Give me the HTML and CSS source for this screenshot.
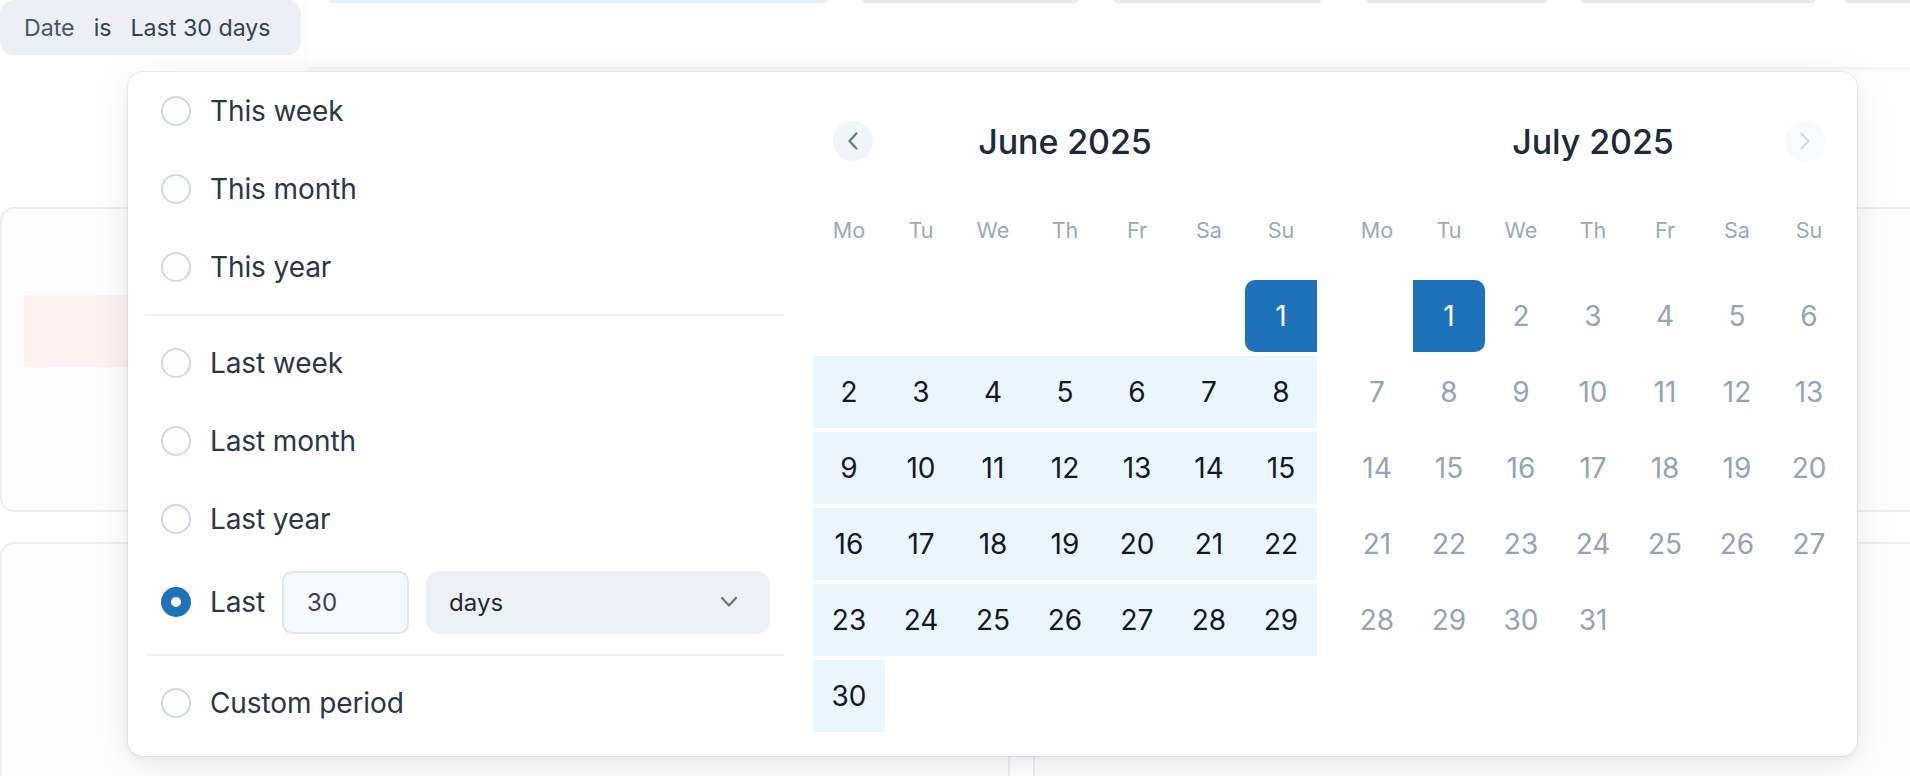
FILE: index.html
```html
<!DOCTYPE html>
<html lang="en">
<head>
<meta charset="utf-8">
<title>Date filter</title>
<link rel="stylesheet" href="styles.css">
</head>
<body>
<div class="page">
  <div class="topbar">
    <div class="chip"><span class="chip-key">Date</span><span class="chip-op">is</span><span class="chip-val">Last 30 days</span></div>
    <div class="toolbox">
      <span class="bar b1"></span><span class="bar b2"></span><span class="bar b3"></span><span class="bar b4"></span><span class="bar b5"></span><span class="bar b6"></span>
    </div>
  </div>
  <div class="cards">
    <div class="card card-wide"><div class="pink"></div></div>
    <div class="card-row">
      <div class="card c2a"></div>
      <div class="card c2b"></div>
    </div>
  </div>

  <div class="popup">
    <div class="presets">
      <div class="opt"><span class="radio"></span><span class="lbl">This week</span></div>
      <div class="opt"><span class="radio"></span><span class="lbl">This month</span></div>
      <div class="opt"><span class="radio"></span><span class="lbl">This year</span></div>
      <div class="sep"></div>
      <div class="opt"><span class="radio"></span><span class="lbl">Last week</span></div>
      <div class="opt"><span class="radio"></span><span class="lbl">Last month</span></div>
      <div class="opt"><span class="radio"></span><span class="lbl">Last year</span></div>
      <div class="opt opt-last"><span class="radio on"></span><span class="lbl">Last</span>
        <div class="num">30</div>
        <div class="select"><span>days</span>
          <svg class="chev" width="20" height="12" viewBox="0 0 20 12"><path d="M3 2 L10 9.5 L17 2" fill="none" stroke="#64748b" stroke-width="2.2" stroke-linecap="round" stroke-linejoin="round"/></svg>
        </div>
      </div>
      <div class="sep"></div>
      <div class="opt"><span class="radio"></span><span class="lbl">Custom period</span></div>
    </div>

    <div class="months">
      <div class="cal">
        <div class="cal-head">
          <span class="nav nav-prev"><svg width="12" height="20" viewBox="0 0 12 20"><path d="M9.5 2.5 L2.5 10 L9.5 17.5" fill="none" stroke="#64748b" stroke-width="2.2" stroke-linecap="round" stroke-linejoin="round"/></svg></span>
          <span class="title">June 2025</span>
          <span class="nav nav-ghost"></span>
        </div>
        <div class="dow"><span>Mo</span><span>Tu</span><span>We</span><span>Th</span><span>Fr</span><span>Sa</span><span>Su</span></div>
        <div class="weeks">
          <span class="d e"></span><span class="d e"></span><span class="d e"></span><span class="d e"></span><span class="d e"></span><span class="d e"></span><span class="d start">1</span>
          <span class="d in">2</span><span class="d in">3</span><span class="d in">4</span><span class="d in">5</span><span class="d in">6</span><span class="d in">7</span><span class="d in">8</span>
          <span class="d in">9</span><span class="d in">10</span><span class="d in">11</span><span class="d in">12</span><span class="d in">13</span><span class="d in">14</span><span class="d in">15</span>
          <span class="d in">16</span><span class="d in">17</span><span class="d in">18</span><span class="d in">19</span><span class="d in">20</span><span class="d in">21</span><span class="d in">22</span>
          <span class="d in">23</span><span class="d in">24</span><span class="d in">25</span><span class="d in">26</span><span class="d in">27</span><span class="d in">28</span><span class="d in">29</span>
          <span class="d in">30</span><span class="d e"></span><span class="d e"></span><span class="d e"></span><span class="d e"></span><span class="d e"></span><span class="d e"></span>
        </div>
      </div>
      <div class="cal">
        <div class="cal-head">
          <span class="nav nav-ghost"></span>
          <span class="title">July 2025</span>
          <span class="nav nav-next"><svg width="12" height="20" viewBox="0 0 12 20"><path d="M2.5 2.5 L9.5 10 L2.5 17.5" fill="none" stroke="#d5dae1" stroke-width="2.2" stroke-linecap="round" stroke-linejoin="round"/></svg></span>
        </div>
        <div class="dow"><span>Mo</span><span>Tu</span><span>We</span><span>Th</span><span>Fr</span><span>Sa</span><span>Su</span></div>
        <div class="weeks">
          <span class="d e"></span><span class="d end">1</span><span class="d out">2</span><span class="d out">3</span><span class="d out">4</span><span class="d out">5</span><span class="d out">6</span>
          <span class="d out">7</span><span class="d out">8</span><span class="d out">9</span><span class="d out">10</span><span class="d out">11</span><span class="d out">12</span><span class="d out">13</span>
          <span class="d out">14</span><span class="d out">15</span><span class="d out">16</span><span class="d out">17</span><span class="d out">18</span><span class="d out">19</span><span class="d out">20</span>
          <span class="d out">21</span><span class="d out">22</span><span class="d out">23</span><span class="d out">24</span><span class="d out">25</span><span class="d out">26</span><span class="d out">27</span>
          <span class="d out">28</span><span class="d out">29</span><span class="d out">30</span><span class="d out">31</span><span class="d e"></span><span class="d e"></span><span class="d e"></span>
        </div>
      </div>
    </div>
  </div>
</div>
</body>
</html>
```

FILE: styles.css
```css
* { box-sizing: border-box; }
html, body { margin: 0; padding: 0; }
body {
  background: #ffffff;
  font-family: Inter, "Noto Sans", "Liberation Sans", sans-serif;
  color: #2b3648;
  overflow: hidden;
  width: 1910px;
  height: 776px;
}
.page { position: relative; width: 1910px; height: 776px; overflow: hidden; }

/* background page */
.topbar { display: flex; height: 67px; }
.chip {
  flex: none;
  width: 301px; height: 55px;
  background: #ecf0f5;
  border-radius: 14px;
  display: flex; align-items: center;
  padding-left: 24px;
  font-size: 23.2px;
  color: #334155;
  gap: 19px;
  white-space: nowrap;
}
.chip-key { color: #4a5568; }
.chip-op { color: #334155; }
.chip-val { color: #334155; }
.toolbox {
  flex: 1; margin-left: 6px; height: 67px;
  background: #ffffff;
  box-shadow: 0 3px 5px rgba(0,0,0,0.05);
  display: flex; align-items: flex-start;
}
.bar { height: 3px; border-radius: 0 0 6px 6px; background: #e7eaee; display: block; flex: none; }
.b1 { width: 499px; margin-left: 22px; background: #e6f0fa; }
.b2 { width: 216px; margin-left: 34px; }
.b3 { width: 207px; margin-left: 36px; }
.b4 { width: 181px; margin-left: 45px; }
.b5 { width: 234px; margin-left: 34px; }
.b6 { width: 80px; margin-left: 30px; }

.cards { margin-top: 140px; }
.card {
  border: 2px solid #eceef2;
  border-radius: 14px;
  background: #fdfdfd;
}
.card-wide { height: 305px; margin-right: -40px; padding: 86px 0 0 22px; }
.pink { width: 260px; height: 72px; background: #fdf1f2; }
.card-row { display: flex; margin-top: 30px; }
.c2a { width: 1010px; height: 300px; flex: none; }
.c2b { flex: 1; margin-left: 23px; margin-right: -40px; height: 300px; }

/* popup */
.popup {
  position: absolute;
  left: 128px; top: 72px;
  width: 1729px; height: 684px;
  background: #ffffff;
  border-radius: 15px;
  box-shadow: 0 0 0 1px rgba(15,23,42,0.05), 0 8px 40px rgba(15,23,42,0.09), 0 2px 6px rgba(15,23,42,0.05);
  display: flex;
  padding-left: 17px;
}
.presets { width: 639px; flex: none; display: flex; flex-direction: column; }
.opt {
  height: 78px;
  display: flex; align-items: center;
  padding-left: 16px;
}
.opt-last { height: 88px; }
.radio {
  width: 30px; height: 30px; border-radius: 50%;
  border: 2px solid #cfd8e3;
  background: #fff;
  flex: none;
}
.radio.on { border: 10px solid #1e72b9; }
.lbl { margin-left: 19px; font-size: 28px; color: #2b3648; letter-spacing: -0.1px; }
.sep { height: 2px; background: #eef2f6; margin: 8px 0; }
.num {
  margin-left: 17px;
  width: 127px; height: 63px;
  border: 2px solid #dfe6ee;
  background: #f5f8fc;
  border-radius: 10px;
  display: flex; align-items: center;
  padding-left: 23px;
  font-size: 24px; color: #334155;
}
.select {
  margin-left: 17px;
  width: 344px; height: 63px;
  background: #edf1f6;
  border-radius: 14px;
  display: flex; align-items: center; justify-content: space-between;
  padding: 0 31px 0 23px;
  font-size: 24px; color: #1e293b;
}
.chev { display: block; }

.months { display: flex; margin-left: 29px; gap: 24px; }
.cal { width: 504px; padding-top: 49px; }
.cal-head {
  height: 40px;
  display: flex; align-items: center; justify-content: space-between;
  padding: 0 20px;
}
.nav {
  width: 40px; height: 40px; border-radius: 50%;
  display: flex; align-items: center; justify-content: center;
}
.nav-prev { background: #f1f5f9; }
.nav-next { background: #f9fafb; }
.nav-ghost { visibility: hidden; }
.title { font-size: 34px; font-weight: 500; color: #1e293b; letter-spacing: -0.1px; }
.dow {
  margin-top: 51px; height: 36px;
  display: grid; grid-template-columns: repeat(7, 72px);
  font-size: 21.6px; color: #9aa8bd;
  text-align: center; line-height: 36px;
}
.weeks {
  margin-top: 32px;
  display: grid;
  grid-template-columns: repeat(7, 72px);
  grid-auto-rows: 72px;
  row-gap: 4px;
}
.d {
  display: flex; align-items: center; justify-content: center;
  font-size: 28px; color: #111827;
}
.d.in { background: #ebf5fe; }
.d.start { background: #1e72b9; color: #ffffff; border-radius: 10px 0 0 10px; }
.d.end { background: #1e72b9; color: #ffffff; border-radius: 0 10px 10px 0; }
.d.out { color: #94a3b8; }
```
